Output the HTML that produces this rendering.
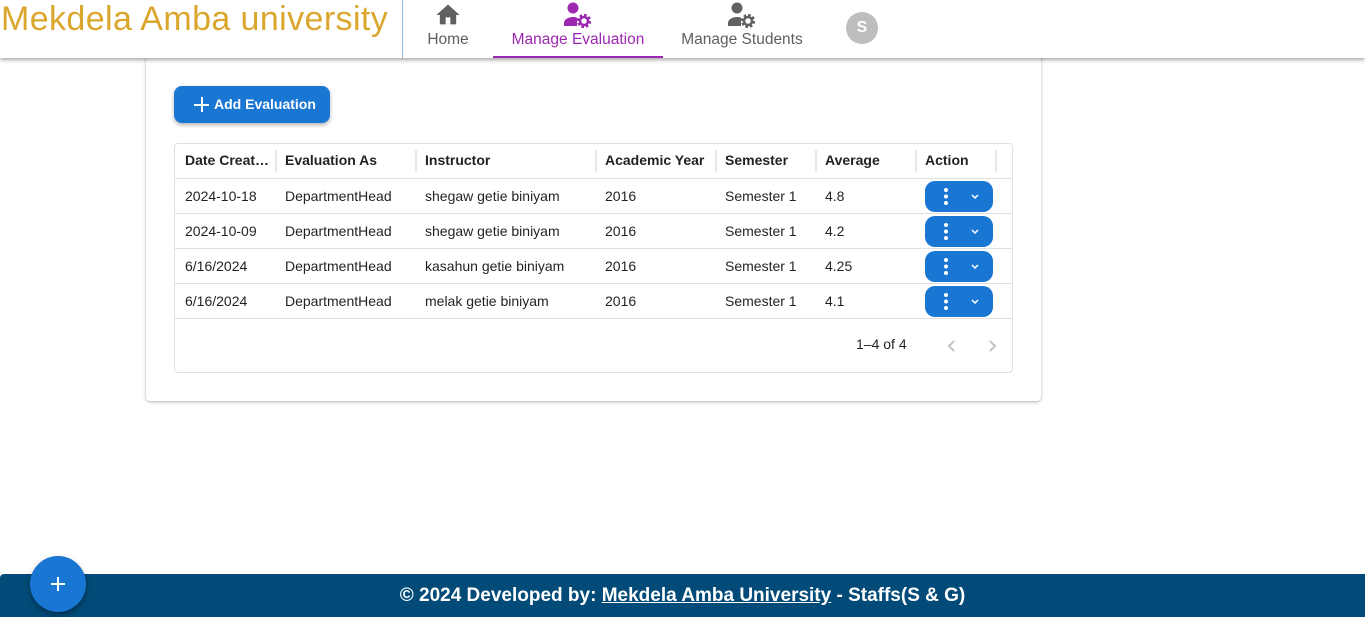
<!DOCTYPE html>
<html><head><meta charset="utf-8"><style>
*{box-sizing:border-box;margin:0;padding:0}
body{width:1365px;height:617px;overflow:hidden;background:#fff;font-family:"Liberation Sans",sans-serif;position:relative;color:rgba(0,0,0,.87)}
.hdr{position:absolute;left:0;top:0;width:1365px;height:58px;background:#fff;box-shadow:0 2px 4px rgba(0,0,0,.35);z-index:2}
.title{position:absolute;left:1px;top:0px;font-size:34px;color:#dba62d;letter-spacing:0.4px}
.vl{position:absolute;left:402px;top:0;height:58px;border-left:1px solid #90b8e0}
.tab{position:absolute;top:0;height:58px;text-align:center;font-size:15.5px;color:#5f5f5f}
.tab svg{display:block;margin:1px auto 0}
.tab span{display:block;margin-top:2px}
.card{position:absolute;left:146px;top:50px;width:895px;height:351px;border-radius:4px;box-shadow:0 1px 3px rgba(0,0,0,.3)}
.add{position:absolute;left:174px;top:86px;width:156px;height:37px;background:#1976d2;border-radius:8px;color:#fff;font-weight:bold;font-size:14px;box-shadow:0 2px 4px rgba(0,0,0,.3);line-height:37px;padding-left:40px}
.add:before{content:"";position:absolute;left:20px;top:11px;width:15px;height:15px;background:linear-gradient(#fff,#fff) center/15px 2px no-repeat,linear-gradient(#fff,#fff) center/2px 15px no-repeat}
.tbl{position:absolute;left:174px;top:143px;width:839px;height:230px;border:1px solid #e0e0e0;border-radius:4px}
.row{position:absolute;left:0;width:837px;height:35px;border-bottom:1px solid #e0e0e0;font-size:14px}
.row div{position:absolute;top:0;line-height:35px}
.h div{font-weight:bold;line-height:33px}
.sep{position:absolute;top:6px;width:2px;height:22px;background:#e8e8e8}
.act{position:absolute;left:750px;top:2px;width:68px;height:31px;background:#1976d2;border-radius:10px}
.foot{position:absolute;left:0;top:574px;width:1365px;height:43px;background:#024b78;border-radius:4px 0 0 0;color:#fff;font-weight:bold;font-size:19px;text-align:center;line-height:43px}
.fab{position:absolute;left:30px;top:556px;width:56px;height:56px;border-radius:50%;background:#1976d2;box-shadow:0 3px 6px rgba(0,0,0,.35);z-index:3}
</style></head><body>
<div class="hdr">
<div class="title">Mekdela Amba university</div>
<div class="vl"></div>
<div class="tab" style="left:418px;width:60px"><svg width="30" height="28" viewBox="0 0 24 24"><path fill="#616161" d="M10 20v-6h4v6h5v-8h3L12 3 2 12h3v8z"/></svg><span>Home</span></div>
<div class="tab" style="left:493px;width:170px;color:#9c27b0;border-bottom:2px solid #9c27b0"><svg width="32" height="28" viewBox="0 0 32 28"><circle cx="11" cy="7" r="5.5" fill="#9c27b0"/><path d="M2 25v-3c0-4 5-6 9-6 1.5 0 3 .2 4 .6V25z" fill="#9c27b0"/><circle cx="22" cy="20" r="5.5" fill="none" stroke="#9c27b0" stroke-width="3.2" stroke-dasharray="2.5 1.8"/><circle cx="22" cy="20" r="4" fill="none" stroke="#9c27b0" stroke-width="2.5"/></svg><span>Manage Evaluation</span></div>
<div class="tab" style="left:672px;width:140px"><svg width="32" height="28" viewBox="0 0 32 28"><circle cx="11" cy="7" r="5.5" fill="#616161"/><path d="M2 25v-3c0-4 5-6 9-6 1.5 0 3 .2 4 .6V25z" fill="#616161"/><circle cx="22" cy="20" r="5.5" fill="none" stroke="#616161" stroke-width="3.2" stroke-dasharray="2.5 1.8"/><circle cx="22" cy="20" r="4" fill="none" stroke="#616161" stroke-width="2.5"/></svg><span>Manage Students</span></div>
<div style="position:absolute;left:846px;top:12px;width:32px;height:32px;border-radius:50%;background:#bdbdbd;color:#fff;font-weight:bold;font-size:16px;text-align:center;line-height:32px">S</div>
</div>
<div class="card"></div>
<div class="add">Add Evaluation</div>
<div class="tbl">
<div class="row h" style="top:0"><div style="left:10px">Date Creat…</div><span class="sep" style="left:100px"></span><div style="left:110px">Evaluation As</div><span class="sep" style="left:240px"></span><div style="left:250px">Instructor</div><span class="sep" style="left:420px"></span><div style="left:430px">Academic Year</div><span class="sep" style="left:540px"></span><div style="left:550px">Semester</div><span class="sep" style="left:640px"></span><div style="left:650px">Average</div><span class="sep" style="left:740px"></span><div style="left:750px">Action</div><span class="sep" style="left:820px"></span></div>
<div class="row" style="top:35px"><div style="left:10px">2024-10-18</div><div style="left:110px">DepartmentHead</div><div style="left:250px">shegaw getie biniyam</div><div style="left:430px">2016</div><div style="left:550px">Semester 1</div><div style="left:650px">4.8</div><span class="act"><svg width="68" height="31"><g fill="#fff"><circle cx="21" cy="9" r="2"/><circle cx="21" cy="15.5" r="2"/><circle cx="21" cy="22" r="2"/></g><path d="M47 14l3 3 3-3" stroke="#fff" stroke-width="1.5" fill="none"/></svg></span></div>
<div class="row" style="top:70px"><div style="left:10px">2024-10-09</div><div style="left:110px">DepartmentHead</div><div style="left:250px">shegaw getie biniyam</div><div style="left:430px">2016</div><div style="left:550px">Semester 1</div><div style="left:650px">4.2</div><span class="act"><svg width="68" height="31"><g fill="#fff"><circle cx="21" cy="9" r="2"/><circle cx="21" cy="15.5" r="2"/><circle cx="21" cy="22" r="2"/></g><path d="M47 14l3 3 3-3" stroke="#fff" stroke-width="1.5" fill="none"/></svg></span></div>
<div class="row" style="top:105px"><div style="left:10px">6/16/2024</div><div style="left:110px">DepartmentHead</div><div style="left:250px">kasahun getie biniyam</div><div style="left:430px">2016</div><div style="left:550px">Semester 1</div><div style="left:650px">4.25</div><span class="act"><svg width="68" height="31"><g fill="#fff"><circle cx="21" cy="9" r="2"/><circle cx="21" cy="15.5" r="2"/><circle cx="21" cy="22" r="2"/></g><path d="M47 14l3 3 3-3" stroke="#fff" stroke-width="1.5" fill="none"/></svg></span></div>
<div class="row" style="top:140px"><div style="left:10px">6/16/2024</div><div style="left:110px">DepartmentHead</div><div style="left:250px">melak getie biniyam</div><div style="left:430px">2016</div><div style="left:550px">Semester 1</div><div style="left:650px">4.1</div><span class="act"><svg width="68" height="31"><g fill="#fff"><circle cx="21" cy="9" r="2"/><circle cx="21" cy="15.5" r="2"/><circle cx="21" cy="22" r="2"/></g><path d="M47 14l3 3 3-3" stroke="#fff" stroke-width="1.5" fill="none"/></svg></span></div>
<div style="position:absolute;left:681px;top:192px;font-size:14px">1–4 of 4</div>
<svg style="position:absolute;left:765px;top:193px" width="60" height="18"><path d="M14 4l-5 5 5 5M50 4l5 5-5 5" stroke="#bdbdbd" stroke-width="1.8" fill="none"/></svg>
</div>
<div class="foot">© 2024 Developed by: <u>Mekdela Amba University</u> - Staffs(S &amp; G)</div>
<div class="fab"><svg width="56" height="56"><path d="M28 21v14M21 28h14" stroke="#fff" stroke-width="2"/></svg></div>
</body></html>
